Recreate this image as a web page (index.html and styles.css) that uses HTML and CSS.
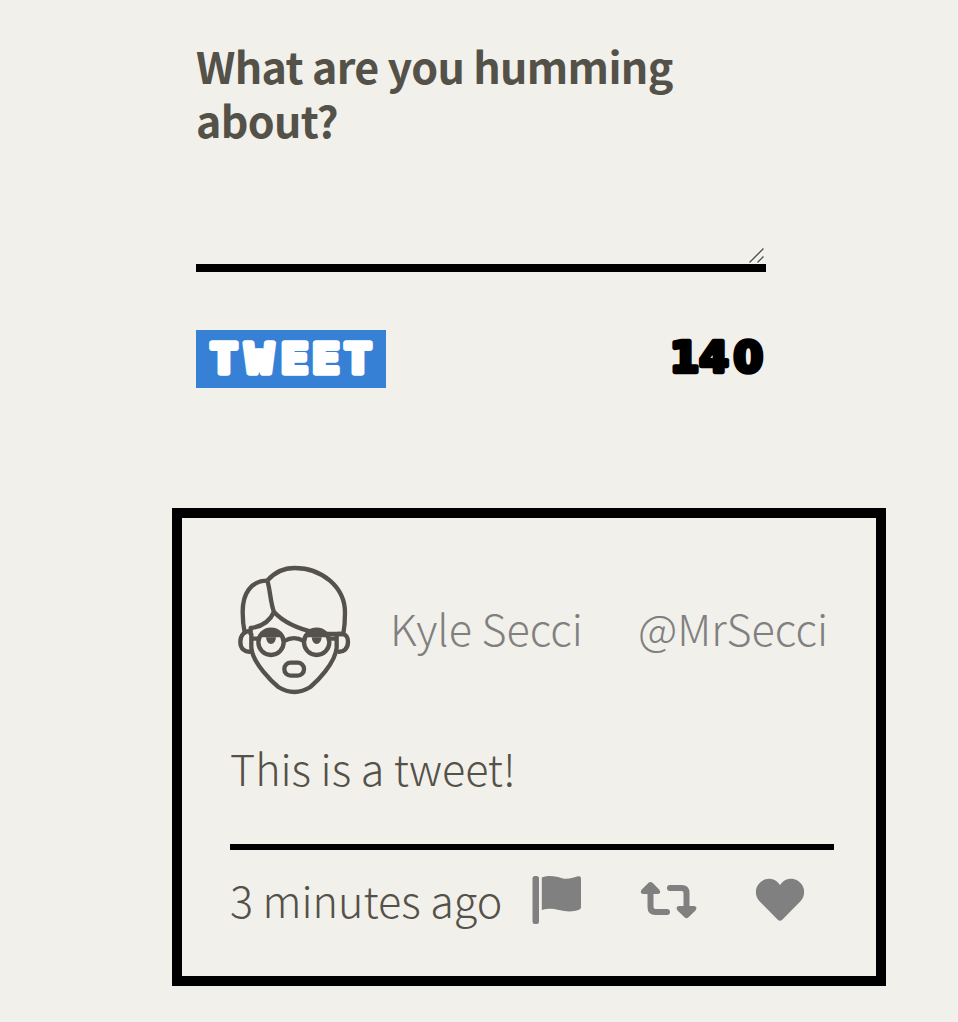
FILE: index.html
```html
<!DOCTYPE html>
<html lang="en">
<head>
<meta charset="utf-8">
<title>Tweeter</title>
<link rel="stylesheet" href="styles.css">
</head>
<body>
<main class="page">
  <section class="composer">
    <h1 class="prompt">What are you humming<br>about?</h1>
    <div class="field">
      <svg class="grip" viewBox="0 0 16 16"><path d="M.5 15 14.500 .5M8.500 15 14.500 9" fill="none" stroke="#fff" stroke-width="3"/><path d="M.5 14.500 14.500 .5M8.500 14.500 14.500 8.500" fill="none" stroke="#555" stroke-width="1.500"/></svg>
    </div>
    <div class="actions">
      <button class="submit"><svg class="display submit-label" viewBox="0 0 190 58"><text transform="scale(1.12 1)" x="25 56.500 88.200 116 144.600" y="43">TWEET</text></svg></button>
      <svg class="display counter" viewBox="0 0 100 58"><text x="18.500 48 82.300" y="42">140</text></svg>
    </div>
  </section>
  <article class="tweet">
    <header class="tweet-head">
      <svg class="avatar" viewBox="0 0 420 450" fill="none" stroke="#55524b" stroke-width="13" stroke-linejoin="round">
        <path d="M127 77C150 50 178 39 209 39C290 39 360 96 360 173Q360 207 355 237H302"/>
        <path d="M127 77C78 77 53 116 53 170Q53 205 59 232"/>
        <path d="M127 77C136 106 136 143 147 171C177 203 220 222 273 233"/>
        <path d="M147 171C133 202 104 216 77 219V240"/>
        <path d="M77 228C58 228 46 241 46 261C46 282 60 292 77 290M337 237H354C365 240 369 248 369 260C369 281 356 292 338 290"/>
        <path d="M79 235V278C82 325 145 384 160 396Q208 426 256 396C274 381 331 325 335 278V240"/>
        <circle cx="138" cy="262" r="38"/><circle cx="275" cy="262" r="38"/>
        <path d="M81 251H103M178 258Q207 241 236 258M310 251H334"/>
        <path d="M106 243Q138 211 170 243ZM243 243Q275 211 307 243Z" fill="#55524b" stroke-width="7"/>
        <path d="M302 237H355" stroke-width="12"/>
        <path d="M123 247H153Q151 267 138 267T123 247M260 247H290Q288 267 275 267T260 247" fill="#55524b" stroke="none"/>
        <rect x="178" y="323" width="59" height="39" rx="19"/>
      </svg>
      <span class="name">Kyle Secci</span>
      <span class="handle">@MrSecci</span>
    </header>
    <p class="message">This is a tweet!</p>
    <footer class="tweet-foot">
      <span class="age">3 minutes ago</span>
      <svg class="icons" viewBox="0 0 300 70" fill="gray">
        <rect x="12.500" y="11" width="6.500" height="48" rx="2.500"/>
        <path d="M21.800 12.500C30 9.800 36 11.500 42 13.200C48 15 54 12.300 58 11.300Q61 10.800 61 13.500V42.500Q61 44 59 44.800C53 47 46 46.800 39 45C32 43.300 27 43.300 21.800 45Z"/>
        <path d="M130.500 28V42Q130.500 47 135.500 47H147M150 23H161.500Q166.500 23 166.500 28V43" fill="none" stroke="gray" stroke-width="6" stroke-linecap="round"/>
        <path d="M128.500 17.800Q130.500 16 132.500 17.800L139.400 24.700Q141.500 28.500 138 29H123Q119.500 28.500 121.500 24.700ZM159 41H174Q178 41.500 175.500 45.500L168.500 52.300Q166.500 54 164.500 52.300L157.500 45.500Q155 41.500 159 41Z"/>
        <path d="M257.500 54.500 239.500 36.300C235.500 32 234.800 25.800 237.500 20.800C242 12.800 252.500 11.500 258.300 18L260 19.900L261.700 18C267.500 11.500 278 12.800 282.500 20.800C285.200 25.800 284.500 32 280.500 36.300L262.500 54.500Q260 57 257.500 54.500Z"/>
      </svg>
    </footer>
  </article>
</main>
</body>
</html>
```
FILE: styles.css
```css
* { box-sizing: border-box; }
body {
  margin: 0;
  background: #f2f0eb;
  color: #545149;
  font-family: "Noto Sans CJK SC", "Source Sans Pro", sans-serif;
  font-size: 43.1px;
  font-weight: 300;
}
.page { height: 1022px; padding: 38px 72px 0 172px; overflow: hidden; }
.composer { width: 570px; margin-left: 24px; }
.prompt { margin: 0; font-size: 43px; font-weight: 700; line-height: 54px; letter-spacing: -0.68px; white-space: nowrap; }
.field { position: relative; height: 126px; border-bottom: 8px solid #000; }
.grip { position: absolute; right: 1px; bottom: 0; width: 16px; height: 16px; }
.actions { display: flex; justify-content: space-between; margin-top: 58px; height: 58px; }
.submit {
  width: 190px;
  padding: 0;
  border: 0;
  background: #3680d6;
}
.display {
  display: block;
  height: 58px;
  font-weight: 700;
  stroke-linejoin: round;
  text-anchor: middle;
}
.submit-label { width: 190px; font-family: "DejaVu Sans Mono", monospace; font-size: 40.5px; fill: #fff; stroke: #fff; stroke-width: 5.6px; }
.counter { width: 100px; font-family: "DejaVu Sans", sans-serif; font-size: 42.5px; fill: #000; stroke: #000; stroke-width: 4.5px; }
.tweet {
  width: 714px;
  height: 478px;
  margin-top: 120px;
  padding: 37px 42px 0 48px;
  border: 10px solid #000;
}
.tweet-head { display: flex; height: 150px; margin-left: -5px; color: gray; line-height: 145px; white-space: nowrap; }
.avatar { flex: none; width: 140px; height: 150px; }
.name { width: 248px; margin-left: 25px; flex: none; }
.message { margin: 30px 0 0; height: 109px; line-height: 64px; }
.tweet-foot { display: flex; width: 604px; height: 100px; border-top: 6px solid #000; line-height: 98px; white-space: nowrap; }
.age { width: 290px; flex: none; }
.icons { flex: none; width: 300px; height: 70px; margin-top: 15px; }
```
